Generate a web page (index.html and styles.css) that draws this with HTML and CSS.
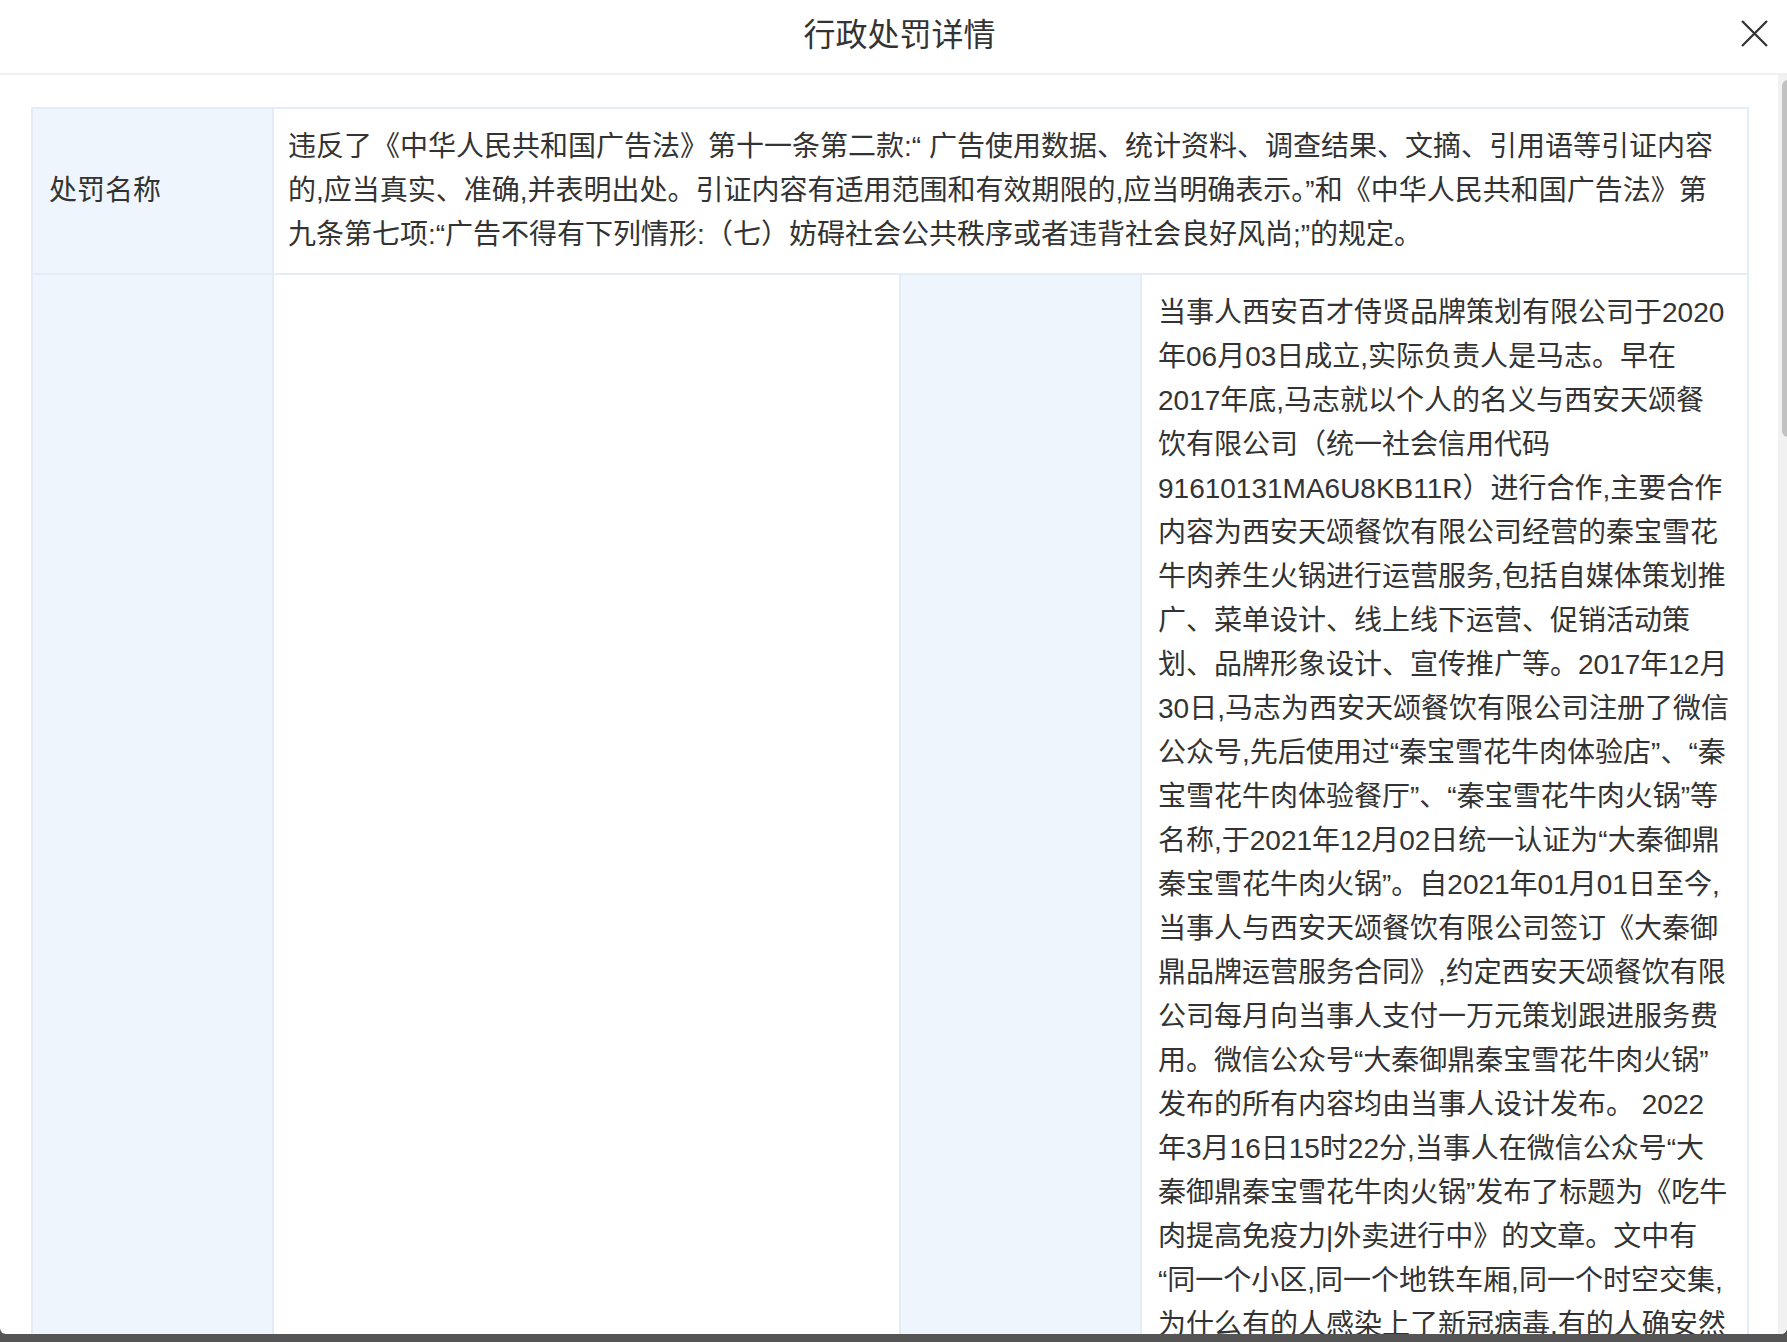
FILE: index.html
```html
<!DOCTYPE html>
<html lang="zh-CN">
<head>
<meta charset="utf-8">
<title>行政处罚详情</title>
<link rel="stylesheet" href="styles.css">
</head>
<body>
<div class="modal">
  <div class="modal-header">
    <div class="modal-title">行政处罚详情</div>
    <button class="close" aria-label="关闭">
      <svg viewBox="0 0 26 26" width="26" height="26"><path d="M1 1 L25 25 M25 1 L1 25" stroke="#333" stroke-width="2.2" fill="none"/></svg>
    </button>
  </div>
  <div class="modal-body">
    <table class="detail">
      <colgroup>
        <col class="c-label"><col class="c-val1"><col class="c-label"><col class="c-val2">
      </colgroup>
      <tr class="row-name">
        <td class="label">处罚名称</td>
        <td class="value wide" colspan="3">违反了《中华人民共和国广告法》第十一条第二款:“ 广告使用数据、统计资料、调查结果、文摘、引用语等引证内容的,应当真实、准确,并表明出处。引证内容有适用范围和有效期限的,应当明确表示。”和《中华人民共和国广告法》第九条第七项:“广告不得有下列情形:（七）妨碍社会公共秩序或者违背社会良好风尚;”的规定。</td>
      </tr>
      <tr class="row-facts">
        <td class="label"></td>
        <td class="value"></td>
        <td class="label"></td>
        <td class="value">当事人西安百才侍贤品牌策划有限公司于2020年06月03日成立,实际负责人是马志。早在2017年底,马志就以个人的名义与西安天颂餐饮有限公司（统一社会信用代码91610131MA6U8KB11R）进行合作,主要合作内容为西安天颂餐饮有限公司经营的秦宝雪花牛肉养生火锅进行运营服务,包括自媒体策划推广、菜单设计、线上线下运营、促销活动策划、品牌形象设计、宣传推广等。2017年12月30日,马志为西安天颂餐饮有限公司注册了微信公众号,先后使用过“秦宝雪花牛肉体验店”、“秦宝雪花牛肉体验餐厅”、“秦宝雪花牛肉火锅”等名称,于2021年12月02日统一认证为“大秦御鼎秦宝雪花牛肉火锅”。自2021年01月01日至今,当事人与西安天颂餐饮有限公司签订《大秦御鼎品牌运营服务合同》,约定西安天颂餐饮有限公司每月向当事人支付一万元策划跟进服务费用。微信公众号“大秦御鼎秦宝雪花牛肉火锅”发布的所有内容均由当事人设计发布。 2022年3月16日15时22分,当事人在微信公众号“大秦御鼎秦宝雪花牛肉火锅”发布了标题为《吃牛肉提高免疫力|外卖进行中》的文章。文中有“同一个小区,同一个地铁车厢,同一个时空交集,为什么有的人感染上了新冠病毒,有的人确安然无恙?答案是:免疫力!”等内容。</td>
      </tr>
    </table>
  </div>
  <div class="scroll-track"><div class="scroll-thumb"></div></div>
</div>
</body>
</html>
```

FILE: styles.css
```css
html, body {
  margin: 0;
  padding: 0;
  height: 100%;
  overflow: hidden;
}
body {
  background: #555555;
  font-family: "Liberation Sans", "Noto Sans CJK SC", sans-serif;
  color: #333333;
}
.modal {
  position: relative;
  height: 1334px;
  background: #ffffff;
  border-radius: 0 0 6px 6px;
  overflow: hidden;
  display: flex;
  flex-direction: column;
}
.modal-header {
  position: relative;
  height: 73px;
  flex: none;
  border-bottom: 2px solid #f0f0f0;
  display: flex;
  align-items: center;
  justify-content: center;
}
.modal-title {
  font-size: 32px;
  color: #333333;
  line-height: 40px;
  padding-left: 12px;
  margin-top: -4px;
}
.close {
  position: absolute;
  top: 20px;
  right: 19px;
  width: 27px;
  height: 27px;
  padding: 0;
  border: 0;
  background: transparent;
  display: flex;
}
.close svg {
  width: 27px;
  height: 27px;
}
.modal-body {
  flex: 1;
  overflow: hidden;
  padding: 32px 40px 0 31px;
}
.detail {
  width: 1716px;
  border-collapse: collapse;
  table-layout: fixed;
  font-size: 28px;
  line-height: 44px;
}
.c-label { width: 241px; }
.c-val1 { width: 627px; }
.c-val2 { width: 607px; }
.detail td {
  border: 2px solid #e2edf8;
  padding: 16px 17px 16px 16px;
  vertical-align: middle;
}
.detail td.wide {
  padding-left: 14px;
}
.detail td.label {
  background: #eef5fd;
}
.row-facts td {
  vertical-align: top;
}
.scroll-track {
  position: absolute;
  right: 0;
  top: 75px;
  bottom: 0;
  width: 9px;
  background: #f1f1f1;
}
.scroll-thumb {
  position: absolute;
  left: 4px;
  top: 5px;
  width: 12px;
  height: 357px;
  background: #c1c1c1;
  border-radius: 6px;
}
```
